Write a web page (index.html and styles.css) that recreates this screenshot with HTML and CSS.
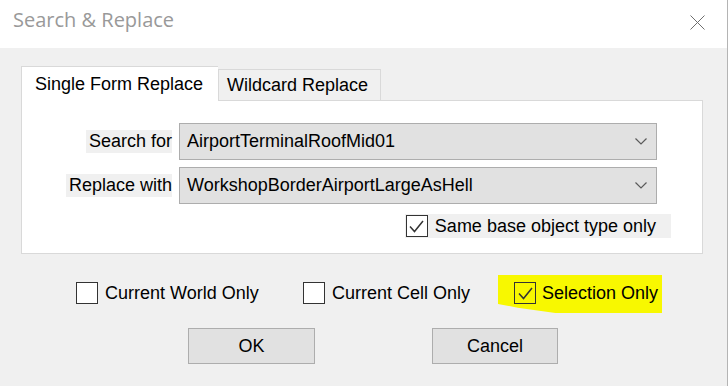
FILE: index.html
```html
<!DOCTYPE html>
<html>
<head>
<meta charset="utf-8">
<link rel="stylesheet" href="styles.css">
</head>
<body>
<div class="window">
  <div class="titlebar">
    <span class="title">Search &amp; Replace</span>
    <svg class="close" width="15" height="15" viewBox="0 0 15 15"><path d="M0.5 0.5 L14.5 14.5 M14.5 0.5 L0.5 14.5" stroke="#6e6e6e" stroke-width="1" fill="none"/></svg>
  </div>
  <div class="body">
    <div class="tabs">
      <div class="tab active">Single Form Replace</div>
      <div class="tab">Wildcard Replace</div>
    </div>
    <div class="panel">
      <div class="row">
        <span class="label">Search for</span>
        <div class="combo"><span>AirportTerminalRoofMid01</span><svg width="12" height="7" viewBox="0 0 12 7"><path d="M0.5 0.5 L6 6 L11.5 0.5" stroke="#5a5a5a" stroke-width="1.2" fill="none"/></svg></div>
      </div>
      <div class="row">
        <span class="label">Replace with</span>
        <div class="combo"><span>WorkshopBorderAirportLargeAsHell</span><svg width="12" height="7" viewBox="0 0 12 7"><path d="M0.5 0.5 L6 6 L11.5 0.5" stroke="#5a5a5a" stroke-width="1.2" fill="none"/></svg></div>
      </div>
      <div class="row check-row">
        <label class="check panel-check">
          <span class="box"><svg width="19" height="19" viewBox="0 0 19 19"><path d="M3 9.5 L7.5 14.5 L16 4" stroke="#333" stroke-width="1.5" fill="none"/></svg></span>
          <span>Same base object type only</span>
        </label>
      </div>
    </div>
    <div class="options">
      <label class="check opt-world"><span class="box"></span><span>Current World Only</span></label>
      <label class="check opt-cell"><span class="box"></span><span>Current Cell Only</span></label>
      <label class="check opt-sel"><span class="highlight"></span><span class="box"><svg width="19" height="19" viewBox="0 0 19 19"><path d="M3 9.5 L7.5 14.5 L16 4" stroke="#333" stroke-width="1.5" fill="none"/></svg></span><span class="txt">Selection Only</span></label>
    </div>
    <div class="buttons">
      <button class="btn ok">OK</button>
      <button class="btn cancel">Cancel</button>
    </div>
  </div>
</div>
</body>
</html>
```
FILE: styles.css
```css
html, body {
  margin: 0;
  padding: 0;
  background: #f0f0f0;
}
.window {
  width: 728px;
  height: 386px;
  box-sizing: border-box;
  border-right: 1px solid #b4b4b4;
  display: flex;
  flex-direction: column;
  font-family: "Liberation Sans", Arial, sans-serif;
  font-size: 18px;
  color: #000;
}
.titlebar {
  height: 48px;
  flex: none;
  background: #fff;
  box-sizing: border-box;
  padding: 7px 0 0 13px;
  display: flex;
  justify-content: space-between;
  align-items: flex-start;
}
.title {
  font-family: "Open Sans", sans-serif;
  font-size: 20px;
  line-height: 26px;
  color: #999;
}
.close {
  margin: 8px 22px 0 0;
}
.body {
  flex: 1;
  background: #f0f0f0;
  padding: 18px 24px 0 21px;
}
.tabs {
  display: flex;
  align-items: flex-end;
  height: 34px;
  position: relative;
  z-index: 1;
}
.tab {
  box-sizing: border-box;
  height: 31px;
  width: 163px;
  border: 1px solid #d9d9d9;
  border-bottom: none;
  background: #f0f0f0;
  padding-left: 8px;
  line-height: 31px;
  white-space: nowrap;
}
.tab.active {
  width: 197px;
  height: 35px;
  margin-bottom: -1px;
  background: #fff;
  padding-left: 13px;
  line-height: 34px;
  border-right: none;
}
.panel {
  height: 154px;
  box-sizing: border-box;
  background: #fff;
  border: 1px solid #d9d9d9;
  padding-top: 22px;
}
.row {
  display: flex;
  justify-content: flex-end;
  align-items: center;
  gap: 7px;
  padding-right: 45px;
  margin-bottom: 7px;
}
.label {
  background: #f0f0f0;
  height: 23px;
  line-height: 23px;
  padding: 0 0 0 3px;
  white-space: nowrap;
}
.combo {
  width: 478px;
  height: 37px;
  box-sizing: border-box;
  border: 1px solid #adadad;
  background: #e1e1e1;
  display: flex;
  align-items: center;
  justify-content: space-between;
  padding: 0 9px 0 7px;
}
.check-row {
  padding-right: 31px;
  margin-top: 10px;
}
.check {
  display: flex;
  align-items: center;
  gap: 7px;
  white-space: nowrap;
  position: relative;
}
.panel-check {
  background: #f0f0f0;
  height: 24px;
  padding: 0 15px 0 1px;
}
.box {
  width: 22px;
  height: 22px;
  box-sizing: border-box;
  border: 1px solid #333;
  background: #fff;
  display: flex;
  align-items: center;
  justify-content: center;
  flex: none;
  position: relative;
}
.options {
  display: flex;
  margin-top: 28px;
  padding-left: 55px;
  height: 22px;
  align-items: center;
}
.opt-world { width: 227px; }
.opt-cell { width: 211px; }
.opt-sel { gap: 6px; }
.opt-sel .box { background: #f8f800; }
.opt-sel .txt { position: relative; }
.highlight {
  position: absolute;
  left: -16px;
  top: -7px;
  width: 164px;
  height: 38px;
  background: #f8f800;
  clip-path: polygon(0 0, 100% 0, 100% 100%, 35% 100%, 12% 86%, 0 76%);
}
.buttons {
  display: flex;
  margin-top: 24px;
  padding-left: 167px;
  gap: 117px;
}
.btn {
  font-family: "Liberation Sans", Arial, sans-serif;
  font-size: 18px;
  color: #000;
  height: 36px;
  width: 127px;
  background: #e1e1e1;
  border: 1px solid #adadad;
  padding: 0;
}
.btn.cancel { width: 126px; }
```
